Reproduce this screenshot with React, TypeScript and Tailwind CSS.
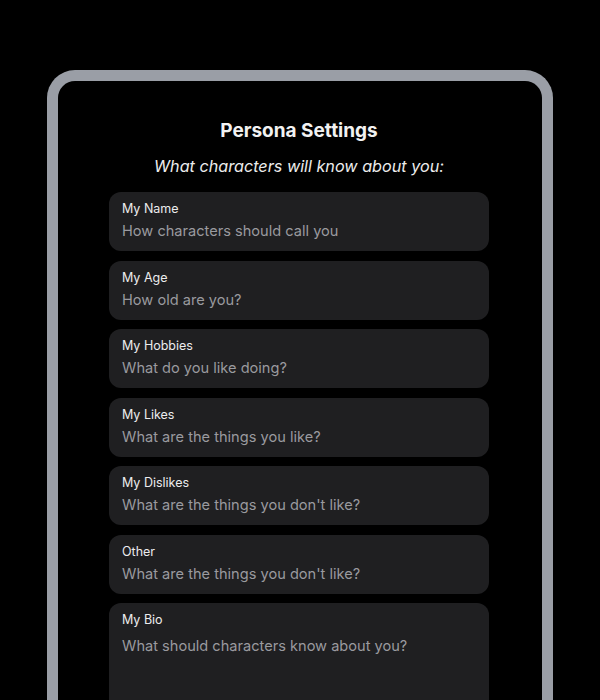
import React from "react";

const fields = [
  { label: "My Name", placeholder: "How characters should call you" },
  { label: "My Age", placeholder: "How old are you?" },
  { label: "My Hobbies", placeholder: "What do you like doing?" },
  { label: "My Likes", placeholder: "What are the things you like?" },
  { label: "My Dislikes", placeholder: "What are the things you don't like?" },
  { label: "Other", placeholder: "What are the things you don't like?" },
];

export default function App() {
  return (
    <div
      className="w-[600px] h-[700px] bg-black overflow-hidden pt-[70px]"
      style={{ fontFamily: "Inter, 'Noto Sans', sans-serif" }}
    >
      <div className="mx-auto w-[506px] h-[700px] border-[11px] border-b-0 border-[#9a9ea6] rounded-t-[28px] bg-black flex flex-col items-center pt-[38px] pr-[2px]">
        <h1 className="text-[19px] leading-[24px] font-bold text-[#f2f2f2]">Persona Settings</h1>
        <p className="mt-[11px] text-[16.2px] leading-[24px] italic text-[#ececec]">
          What characters will know about you:
        </p>
        <div className="mt-[14px] w-[380px] flex flex-col gap-[9.5px]">
          {fields.map((f) => (
            <div key={f.label} className="h-[59px] rounded-[12px] bg-[#1f1f21] px-[13px] pt-[9px]">
              <div className="text-[12.5px] leading-[16px] text-[#ececee]">{f.label}</div>
              <div className="mt-[4px] text-[14.6px] leading-[20px] text-[#9a9a9f]">{f.placeholder}</div>
            </div>
          ))}
          <div className="h-[140px] rounded-[12px] bg-[#1f1f21] px-[13px] pt-[9px]">
            <div className="text-[12.5px] leading-[16px] text-[#ececee]">My Bio</div>
            <div className="mt-[8px] text-[14.6px] leading-[20px] text-[#9a9a9f]">
              What should characters know about you?
            </div>
          </div>
        </div>
      </div>
    </div>
  );
}
